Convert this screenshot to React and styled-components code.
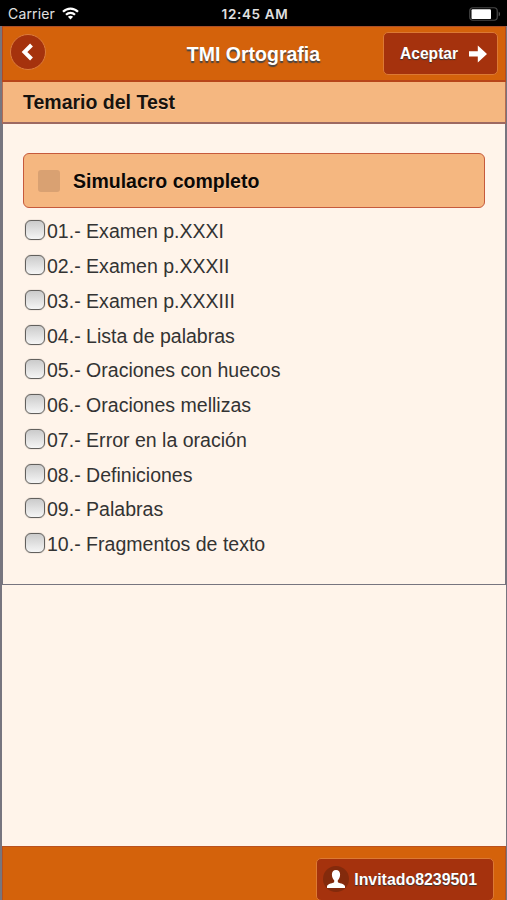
import styled, { createGlobalStyle } from 'styled-components';

const color = {
    orange: '#d4620b',
    rust: '#a5320d',
    peach: '#f5b780',
    cream: '#fff4ea',
    edge: '#77757f',
}

const GlobalStyle = createGlobalStyle`
    *{
        box-sizing: border-box;
    }
    body{
        margin: 0;
        background-color: ${color.cream};
        font-family: "Liberation Sans", Arial, sans-serif;
    }
    h1, h2, p, ul{
        margin: 0;
        padding: 0;
    }
`

const Screen = styled.div`
    width: 507px;
    height: 900px;
    display: flex;
    flex-direction: column;
    overflow: hidden;
`

const StatusBar = styled.div`
    height: 26px;
    flex: none;
    display: grid;
    grid-template-columns: 1fr auto 1fr;
    align-items: center;
    padding: 1px 6px 0 8px;
    background-color: #000;
    color: #e0e0e0;
    font-family: Inter, sans-serif;
    font-size: 14px;
    line-height: 24px;

    .carrier{
        display: flex;
        align-items: center;
        gap: 7px;
        letter-spacing: 0.15px;
    }
    .time{
        font-size: 13.5px;
        font-weight: 600;
        letter-spacing: 0.65px;
        margin-left: 1px;
    }
    .battery{
        justify-self: end;
        display: block;
    }
`

const Page = styled.div`
    flex: 1;
    min-height: 0;
    display: flex;
    flex-direction: column;
    border-left: 2px solid ${color.edge};
    border-right: 1px solid ${color.edge};
`

const Header = styled.div`
    height: 56px;
    flex: none;
    display: grid;
    grid-template-columns: 121px 1fr 122px;
    align-items: center;
    border: 1px solid #b54a20;
    border-top-color: #a94f2a;
    border-bottom: 2px solid #b8461a;
    background-color: ${color.orange};

    .title{
        text-align: center;
        color: #fff;
        font-size: ${props => props.$size}px;
        line-height: 24px;
        text-shadow: 0 1.5px 1px #444;
    }
`

const BackButton = styled.button`
    width: 36px;
    height: 36px;
    margin: 0 0 3px 7px;
    padding: 0;
    display: flex;
    align-items: center;
    justify-content: center;
    border: 1px solid #dc7c3c;
    border-radius: 50%;
    background-color: ${color.rust};
`

const ActionButton = styled.button`
    width: ${props => props.$width}px;
    height: 43px;
    padding: 1px ${props => props.$right}px 0 ${props => props.$left}px;
    display: flex;
    align-items: center;
    justify-content: space-between;
    border: 1px solid #dc7934;
    border-radius: 5px;
    background-color: ${color.rust};
    color: #fff;
    font-family: inherit;
    font-size: ${props => props.$size}px;
    font-weight: bold;
    line-height: 20px;
    white-space: nowrap;
    text-shadow: 0 1px 1px #333;
`

const SubHeader = styled.div`
    height: 42px;
    flex: none;
    padding: 0 20px;
    border: 1px solid #b46a50;
    border-top: 0;
    border-bottom: 2px solid #9d6961;
    background-color: ${color.peach};

    .title{
        color: #17120e;
        font-size: 19.5px;
        line-height: 41px;
        text-shadow: 0 1px 0 #fbd0a8;
    }
`

const Content = styled.div`
    height: 461px;
    flex: none;
    padding: 29px 20px 0 20px;
    border: 1px solid ${color.edge};
    border-top: 0;
`

const AllTopics = styled.div`
    height: 55px;
    display: flex;
    align-items: center;
    padding: 1px 0 0 14px;
    border: 1px solid #c65a3c;
    border-radius: 6px;
    background-color: ${color.peach};
    color: #0c0805;
    font-size: 19.5px;
    font-weight: bold;
    text-shadow: 0 1px 0 #fbd0a8;

    .box{
        width: 22px;
        height: 22px;
        margin-right: 13px;
        border-radius: 3px;
        background-color: #d9a172;
    }
`

const TopicList = styled.ul`
    padding: 6px 0 0 2px;
    list-style: none;
`

const Topic = styled.li`
    height: 34.75px;
    display: flex;
    align-items: center;
    color: #333;
    font-size: 19.55px;
    line-height: 34px;
    white-space: nowrap;

    .check{
        width: 20px;
        height: 20px;
        margin: 0 2px 2px 0;
        border: 1px solid #62605d;
        border-radius: 6px;
        background: linear-gradient(#cbcbcb, #f5f5f5);
        box-shadow: 0 0 1px #77736f;
    }
`

const Footer = styled.div`
    height: 54px;
    flex: none;
    margin-top: auto;
    padding: 11px 11px 0 0;
    display: flex;
    justify-content: flex-end;
    border: 1px solid #b95220;
    border-bottom: 0;
    background-color: ${color.orange};
`

const UserBadge = styled.span`
    width: 26px;
    height: 26px;
    margin-bottom: 2px;
    display: flex;
    align-items: center;
    justify-content: center;
    border-radius: 50%;
    background-color: #832a0c;
`

const topics = [
    'Examen p.XXXI',
    'Examen p.XXXII',
    'Examen p.XXXIII',
    'Lista de palabras',
    'Oraciones con huecos',
    'Oraciones mellizas',
    'Error en la oración',
    'Definiciones',
    'Palabras',
    'Fragmentos de texto',
]

const WifiIcon = () => (
    <svg width="17" height="13" viewBox="0 0 17 13" fill="none" stroke="#fff" strokeWidth="2.2">
        <path d="M1 4.8C5.2 .5 11.8 .5 16 4.8" />
        <path d="M4 7.8C6.6 5.2 10.4 5.2 13 7.8" />
        <path d="M8.5 12.5L5.9 9.8C7.4 8.4 9.6 8.4 11.1 9.8Z" fill="#fff" stroke="none" />
    </svg>
)

const BatteryIcon = () => (
    <svg className="battery" width="32" height="14" viewBox="0 0 32 14">
        <rect x=".75" y=".75" width="27.5" height="12.5" rx="3.2" fill="none" stroke="#484848" strokeWidth="1.2" />
        <rect x="2.5" y="2.3" width="19.5" height="9.8" rx="1.2" fill="#fff" />
        <path d="M29.7 4.7c1.8.7 1.8 3.9 0 4.6z" fill="#555" />
    </svg>
)

const BackIcon = () => (
    <svg width="14" height="18" viewBox="0 0 14 18" fill="none" stroke="#fff" strokeWidth="4">
        <path d="M10.5 2L3.5 9L10.5 16" />
    </svg>
)

const ArrowIcon = () => (
    <svg width="18" height="18" viewBox="0 0 18 18" fill="#fff">
        <path d="M0 6.2H8.8V.5L18 9L8.8 17.5V11.4H0Z" />
    </svg>
)

const UserIcon = () => (
    <svg width="18" height="18" viewBox="0 0 18 18" fill="#fff">
        <path d="M9 0C6.3 0 4.9 1.9 4.9 4.6C4.9 7 5.8 9.2 7.2 10.3V12C7.2 13.2 0 13.6 0 16.3V18H18V16.3C18 13.6 10.8 13.2 10.8 12V10.3C12.2 9.2 13.1 7 13.1 4.6C13.1 1.9 11.7 0 9 0Z" />
    </svg>
)

const App = () => {
    return (
        <>
            <GlobalStyle />
            <Screen>
                <StatusBar>
                    <div className="carrier">
                        <span>Carrier</span>
                        <WifiIcon />
                    </div>
                    <span className="time">12:45 AM</span>
                    <BatteryIcon />
                </StatusBar>
                <Page>
                    <Header $size={19.5}>
                        <BackButton aria-label="Volver">
                            <BackIcon />
                        </BackButton>
                        <h1 className="title">TMI Ortografia</h1>
                        <ActionButton $width={115} $left={16} $right={10} $size={15.6}>
                            <span>Aceptar</span>
                            <ArrowIcon />
                        </ActionButton>
                    </Header>
                    <SubHeader>
                        <h2 className="title">Temario del Test</h2>
                    </SubHeader>
                    <Content>
                        <AllTopics>
                            <span className="box" />
                            <span>Simulacro completo</span>
                        </AllTopics>
                        <TopicList>
                            {topics.map((topic, index) => (
                                <Topic key={topic}>
                                    <span className="check" />
                                    <span>{String(index + 1).padStart(2, '0')}.- {topic}</span>
                                </Topic>
                            ))}
                        </TopicList>
                    </Content>
                    <Footer>
                        <ActionButton $width={178} $left={6} $right={16} $size={15.9}>
                            <UserBadge>
                                <UserIcon />
                            </UserBadge>
                            <span>Invitado8239501</span>
                        </ActionButton>
                    </Footer>
                </Page>
            </Screen>
        </>
    );
}

export default App;
